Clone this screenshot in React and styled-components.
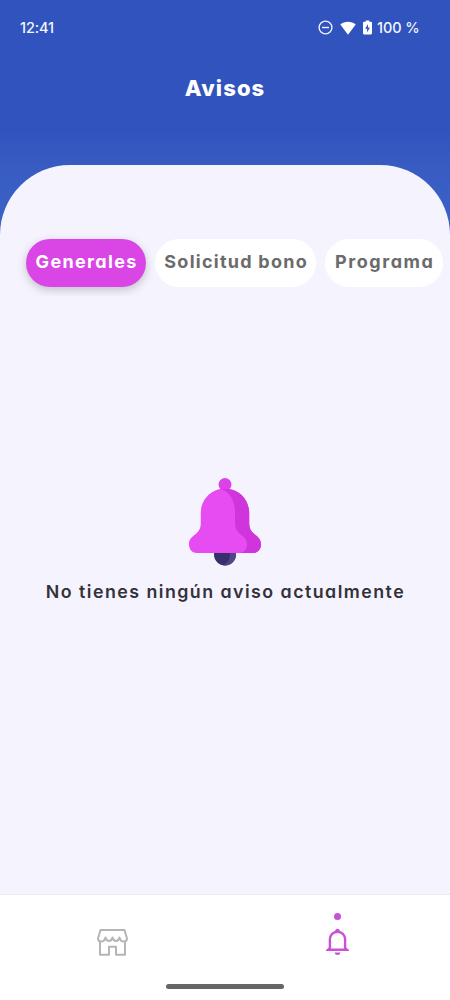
import React from "react";
import styled, { createGlobalStyle } from "styled-components";

const GlobalStyle = createGlobalStyle`
  *, *::before, *::after { box-sizing: border-box; }
  body { margin: 0; }
`;

const Screen = styled.div`
  width: 450px;
  height: 1000px;
  display: flex;
  flex-direction: column;
  overflow: hidden;
  font-family: Inter, "Noto Sans", sans-serif;
  font-feature-settings: "cv11";
  background: linear-gradient(180deg, #3153be 0, #3153be 130px, #385bc1 165px, #3b65c9 240px);
`;

const StatusBar = styled.header`
  height: 56px;
  padding: 0 30px 0 20px;
  display: flex;
  align-items: center;
  justify-content: space-between;
  color: #f2f6ff;
  font-size: 14.5px;
  line-height: 18px;
  font-weight: 500;
  white-space: nowrap;
`;

const Clock = styled.time`
  padding-bottom: 1px;
  letter-spacing: -0.1px;
`;

const StatusIcons = styled.div`
  display: flex;
  align-items: center;
  padding-bottom: 1px;

  svg { display: block; }
`;

const DndIcon = styled.svg`
  margin-right: 7px;
`;

const WifiIcon = styled.svg`
  margin-right: 7px;
`;

const BatteryIcon = styled.svg`
  margin-right: 5px;
`;

const Percent = styled.span`
  width: 43px;
  letter-spacing: -0.1px;
`;

const Title = styled.h1`
  margin: 0;
  height: 109px;
  padding-top: 18px;
  text-align: center;
  color: #fff;
  font-size: 22px;
  line-height: 28px;
  font-weight: 800;
  letter-spacing: 1.1px;
`;

const Sheet = styled.main`
  flex: 1;
  display: flex;
  flex-direction: column;
  border-radius: 70px 70px 0 0;
  background: #f5f4fe;
`;

const Tabs = styled.div`
  margin-top: 64px;
  height: 67px;
  padding: 10px 7px 9px 26px;
  display: flex;
  gap: 9px;
  overflow: hidden;
`;

const Tab = styled.button`
  flex: none;
  width: ${(p) => p.$width}px;
  height: 48px;
  padding: 0 0 4px;
  border: 0;
  border-radius: 24px;
  font: inherit;
  font-feature-settings: inherit;
  font-size: 18px;
  font-weight: 700;
  letter-spacing: ${(p) => p.$tracking}px;
  text-indent: ${(p) => p.$tracking}px;
  white-space: nowrap;
  color: ${(p) => (p.$active ? "#fff" : "#6b6b6b")};
  background: ${(p) => (p.$active ? "#d946e5" : "#fff")};
  box-shadow: ${(p) => (p.$active ? "0 3px 9px rgba(60, 60, 60, 0.28)" : "none")};
`;

const EmptyState = styled.section`
  flex: 1;
  padding-top: 182px;
  display: flex;
  flex-direction: column;
  align-items: center;
`;

const Message = styled.p`
  margin: 12px 0 0;
  color: #33313a;
  font-size: 17.8px;
  line-height: 28px;
  font-weight: 600;
  letter-spacing: 1.47px;
  text-indent: 1px;
  white-space: nowrap;
`;

const BottomNav = styled.nav`
  height: 106px;
  display: flex;
  flex-direction: column;
  align-items: center;
  border-top: 1px solid #ececf1;
  background: #fff;
`;

const NavItems = styled.div`
  width: 450px;
  height: 89px;
  display: grid;
  grid-template-columns: 1fr 1fr;
`;

const NavItem = styled.div`
  display: flex;
  flex-direction: column;
  align-items: center;
  padding-top: 18px;
`;

const ActiveDot = styled.span`
  width: 7px;
  height: 7px;
  margin-bottom: 8px;
  border-radius: 50%;
  background: ${(p) => (p.$active ? "#cb50d8" : "transparent")};
`;

const HomeIndicator = styled.div`
  width: 118px;
  height: 5px;
  border-radius: 3px;
  background: #666;
`;

const tabs = [
  { label: "Generales", width: 120, tracking: 1.35, active: true },
  { label: "Solicitud bono", width: 161, tracking: 1.25 },
  { label: "Programa", width: 118, tracking: 1.55 },
];

function BellPicture() {
  return (
    <svg width="74" height="88" viewBox="0 0 74 88">
      <path d="M26 72v4.500a11 11 0 0 0 22 0V72Z" fill="#36306d" />
      <path d="M42 72v4.500c0 5-2.500 9-7 10.800 7 1.200 13-4 13-10.800V72Z" fill="#504786" />
      <circle cx="37" cy="6.500" r="6.500" fill="#db43e6" />
      <path d="M37 10.500C23 10.500 12.800 22 12.800 35v10C12.800 58 1 56 1 66.500 1 71.500 4.500 75 9 75h56c4.500 0 8-3.500 8-8.500C73 56 61.200 58 61.200 45V35C61.200 22 51 10.500 37 10.500Z" fill="#e64cf2" />
      <path d="M32 11C42 13 47 23 47 35v10C47 58 59 56 59 66.500c0 5-3.500 8.500-8 8.500h14c4.500 0 8-3.500 8-8.500C73 56 61.200 58 61.200 45V35C61.200 20 49 8.500 32 11Z" fill="#d034dc" />
    </svg>
  );
}

function StoreGlyph() {
  return (
    <svg width="31" height="28" viewBox="0 0 31 28" fill="none" stroke="#b5b5b5" strokeWidth="2" strokeLinejoin="round">
      <path d="M3.500 2h24L30 10.500c0 1.900-1.300 3.100-3.200 3.100-2 0-3.600-1.500-4.300-4.100-.6 2.500-1.800 3.600-3.500 3.600s-2.900-1.100-3.500-3.600c-.6 2.500-1.800 3.600-3.500 3.600S9.100 12 8.500 9.500c-.7 2.600-2.300 4.100-4.300 4.100-1.900 0-3.200-1.200-3.200-3.100Z" />
      <path d="M3 13.500v13.200h9v-8h7v8h9V13.500" />
    </svg>
  );
}

function BellGlyph() {
  return (
    <svg width="23" height="28" viewBox="0 0 23 28">
      <path d="M11.500.8c1.400 0 2.400 1 2.600 2.600H8.900C9.100 1.800 10.100.8 11.500.8Z" fill="#cb50d8" />
      <path d="M3.900 20v-8.700a7.600 7.600 0 0 1 15.200 0V20l1.900 1.800H2Z" fill="none" stroke="#cb50d8" strokeWidth="2.400" />
      <path d="M8.600 24.500h5.800c-.3 1.700-1.300 2.500-2.900 2.500s-2.600-.8-2.900-2.500Z" fill="#cb50d8" />
    </svg>
  );
}

export default function App() {
  return (
    <Screen>
      <GlobalStyle />
      <StatusBar>
        <Clock>12:41</Clock>
        <StatusIcons>
          <DndIcon width="15" height="15" viewBox="0 0 15 15" fill="none" stroke="#edf2ff" strokeWidth="1.400">
            <circle cx="7.500" cy="7.500" r="6.400" />
            <path d="M4 7.500h7" />
          </DndIcon>
          <WifiIcon width="16" height="14" viewBox="0 0 16 14" fill="#fff">
            <path d="M8 13.800.3 3.500C4.500-.2 11.500-.2 15.700 3.500Z" />
          </WifiIcon>
          <BatteryIcon width="9" height="15" viewBox="0 0 9 15">
            <path d="M2.700.5h3.600v1.300h1.500c.7 0 1.200.5 1.200 1.200v10.300c0 .7-.5 1.200-1.200 1.200H1.200C.5 14.500 0 14 0 13.300V3c0-.7.5-1.200 1.200-1.200h1.500Z" fill="#fff" />
            <path d="M5 4 2.200 8.700h1.900v3.800l2.800-5H5Z" fill="#3153be" />
          </BatteryIcon>
          <Percent>100 %</Percent>
        </StatusIcons>
      </StatusBar>
      <Title>Avisos</Title>
      <Sheet>
        <Tabs>
          {tabs.map((tab) => (
            <Tab key={tab.label} $width={tab.width} $tracking={tab.tracking} $active={tab.active}>
              {tab.label}
            </Tab>
          ))}
        </Tabs>
        <EmptyState>
          <BellPicture />
          <Message>No tienes ningún aviso actualmente</Message>
        </EmptyState>
      </Sheet>
      <BottomNav>
        <NavItems>
          <NavItem>
            <ActiveDot />
            <StoreGlyph />
          </NavItem>
          <NavItem>
            <ActiveDot $active />
            <BellGlyph />
          </NavItem>
        </NavItems>
        <HomeIndicator />
      </BottomNav>
    </Screen>
  );
}
